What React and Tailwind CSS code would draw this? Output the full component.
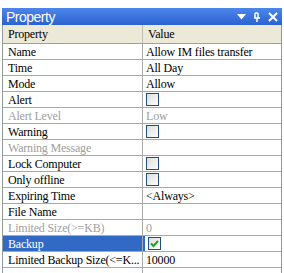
import React from 'react';

const rows = [
    { label: 'Name', value: 'Allow IM files transfer' },
    { label: 'Time', value: 'All Day' },
    { label: 'Mode', value: 'Allow' },
    { label: 'Alert', check: false },
    { label: 'Alert Level', value: 'Low', disabled: true },
    { label: 'Warning', check: false },
    { label: 'Warning Message', value: '', disabled: true },
    { label: 'Lock Computer', check: false },
    { label: 'Only offline', check: false },
    { label: 'Expiring Time', value: '<Always>' },
    { label: 'File Name', value: '' },
    { label: 'Limited Size(>=KB)', value: '0', disabled: true },
    { label: 'Backup', check: true, selected: true },
    { label: 'Limited Backup Size(<=K...', value: '10000' },
    { label: '', value: '' },
];

const CheckBox = ({ checked }) => (
    <span className="w-[13px] h-[13px] border border-[#1c5180] bg-gradient-to-br from-[#dcdcd7] to-white flex items-center justify-center">
        {checked && (
            <svg width="9" height="9" viewBox="0 0 9 9">
                <path d="M1 4.5 L3.5 7 L8 2" stroke="#21a121" strokeWidth="2" fill="none" />
            </svg>
        )}
    </span>
);

export default function App() {
    return (
        <div className="w-[284px] h-[273px] bg-white pt-[8px] px-[2px] overflow-hidden" style={{ fontFamily: '"Liberation Serif", serif' }}>
            {/* Title bar */}
            <div className="h-[17px] bg-gradient-to-b from-[#4d86ea] to-[#2a62d0] flex items-center justify-between pl-[4px] pr-[4px]">
                <span className="text-white text-[14px] tracking-[-0.5px] leading-none" style={{ fontFamily: '"Liberation Sans", sans-serif' }}>Property</span>
                <div className="flex items-center gap-[7px] text-white">
                    <svg width="9" height="6" viewBox="0 0 9 6"><path d="M0 0 H9 L4.5 5.5 Z" fill="white" /></svg>
                    <svg width="8" height="10" viewBox="0 0 8 10">
                        <path d="M2 1 V6 M5 1 V6 M1 6 H7 M4 6 V10 M2 1 H5" stroke="white" strokeWidth="1.5" fill="none" />
                    </svg>
                    <svg width="10" height="10" viewBox="0 0 10 10"><path d="M1 1 L9 9 M9 1 L1 9" stroke="white" strokeWidth="2" /></svg>
                </div>
            </div>

            {/* Grid */}
            <div className="border-l border-r border-[#919b9c] bg-white text-[12px] tracking-[-0.2px] leading-none text-black">
                <div className="flex h-[19px] bg-[#ece9d8] border-b border-[#a0a0a0]">
                    <div className="w-[140px] pl-[5px] flex items-center border-r border-[#c0bfb4]">Property</div>
                    <div className="flex-1 pl-[5px] flex items-center">Value</div>
                </div>
                {rows.map((r, i) => (
                    <div key={i} className="flex h-[16px] border-b border-[#a9a9a9]">
                        <div className={`w-[140px] pl-[5px] flex items-center whitespace-nowrap overflow-hidden border-r border-[#a9a9a9] ${r.selected ? 'bg-[#316ac5] text-white' : r.disabled ? 'text-[#a0a0a0]' : ''}`}>
                            {r.label}
                        </div>
                        <div className={`flex-1 pl-[3px] flex items-center ${r.disabled ? 'text-[#a0a0a0]' : ''} ${r.selected ? 'border-l-2 border-[#316ac5] pl-[1px]' : ''}`}>
                            {r.check !== undefined ? <CheckBox checked={r.check} /> : r.value}
                        </div>
                    </div>
                ))}
            </div>
        </div>
    );
}
